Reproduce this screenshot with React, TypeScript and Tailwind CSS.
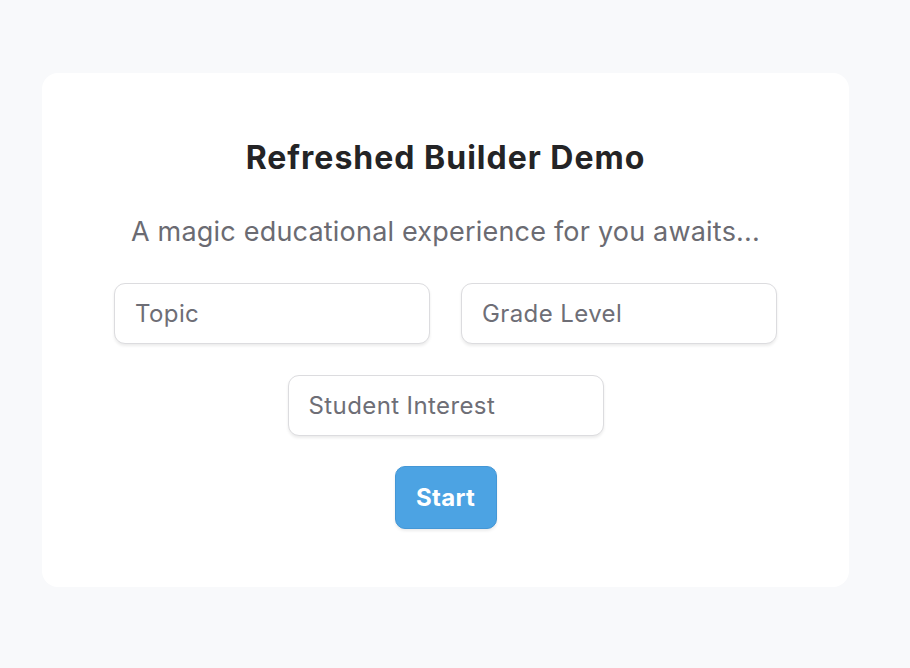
export default function App() {
  return (
    <div className="min-h-[668px] w-full bg-[#f8f9fb] pt-[73px] font-['Inter','Liberation_Sans',sans-serif]">
      <div className="mx-[42px] w-[807px] rounded-[16px] bg-white pt-[66px] pb-[58px] flex flex-col items-center">
        <h1 className="text-[32px] leading-[38px] font-bold tracking-[1px] text-[#242426]">Refreshed Builder Demo</h1>
        <p className="mt-[39px] text-[27px] leading-[32px] tracking-[0.2px] text-[#6b6b72]">
          A magic educational experience for you awaits...
        </p>

        <div className="mt-[35px] flex gap-[31px]">
          <input
            placeholder="Topic"
            className="h-[61px] w-[316px] rounded-[11px] border border-[#dcdcdf] bg-white px-[20px] text-[24px] tracking-[0.4px] text-[#333] placeholder:text-[#6e6e76] shadow-[0_2px_3px_rgba(0,0,0,0.08)] outline-none"
          />
          <input
            placeholder="Grade Level"
            className="h-[61px] w-[316px] rounded-[11px] border border-[#dcdcdf] bg-white px-[20px] text-[24px] tracking-[0.4px] text-[#333] placeholder:text-[#6e6e76] shadow-[0_2px_3px_rgba(0,0,0,0.08)] outline-none"
          />
        </div>

        <input
          placeholder="Student Interest"
          className="mt-[31px] h-[61px] w-[316px] rounded-[11px] border border-[#dcdcdf] bg-white px-[20px] text-[24px] tracking-[0.4px] text-[#333] placeholder:text-[#6e6e76] shadow-[0_2px_3px_rgba(0,0,0,0.08)] outline-none"
        />

        <button className="mt-[30px] h-[63px] w-[102px] rounded-[10px] border border-[#4497d6] bg-[#4ca3e3] text-[24px] font-bold tracking-[0.3px] text-white shadow-[0_2px_3px_rgba(0,0,0,0.08)]">
          Start
        </button>
      </div>
    </div>
  )
}
